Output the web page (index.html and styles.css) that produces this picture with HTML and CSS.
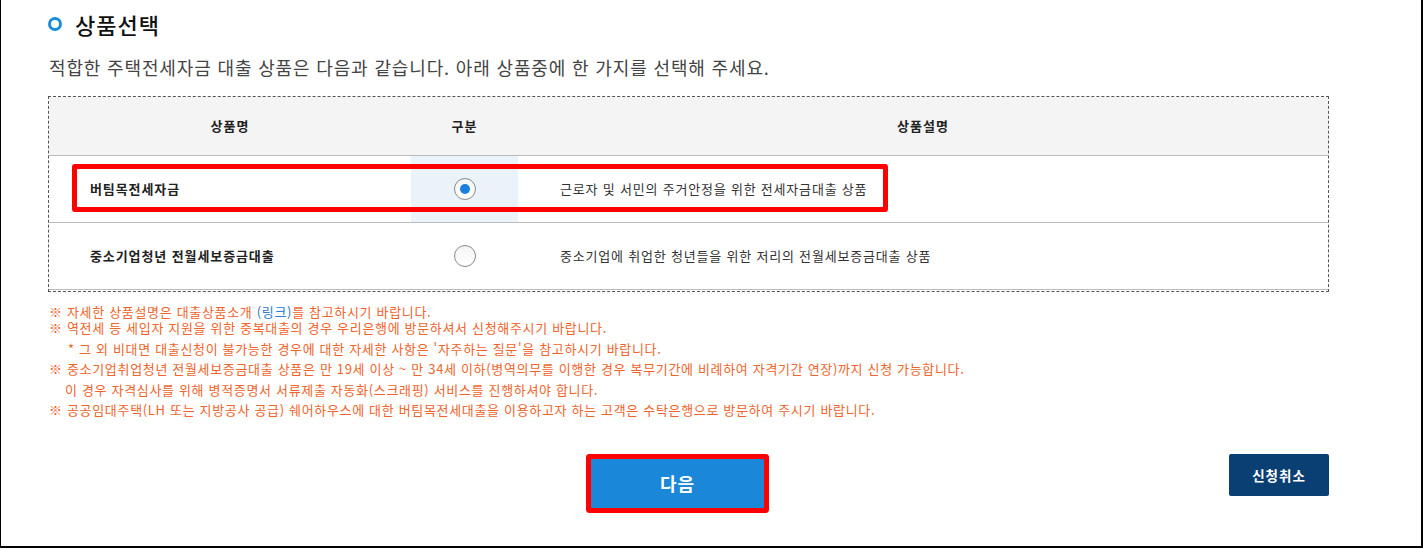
FILE: index.html
```html
<!DOCTYPE html>
<html lang="ko">
<head>
<meta charset="utf-8">
<title>상품선택</title>
<link rel="stylesheet" href="styles.css">
</head>
<body>
<div class="frame">
  <div class="content">
    <h2 class="title"><span class="title-icon"></span>상품선택</h2>
    <p class="lead">적합한 주택전세자금 대출 상품은 다음과 같습니다. 아래 상품중에 한 가지를 선택해 주세요.</p>

    <div class="table-wrap">
      <table class="products">
        <colgroup>
          <col class="c-name">
          <col class="c-type">
          <col class="c-desc">
        </colgroup>
        <thead>
          <tr>
            <th>상품명</th>
            <th>구분</th>
            <th>상품설명</th>
          </tr>
        </thead>
        <tbody>
          <tr>
            <td class="name">버팀목전세자금</td>
            <td class="type selected"><span class="radio checked"></span></td>
            <td class="desc">근로자 및 서민의 주거안정을 위한 전세자금대출 상품</td>
          </tr>
          <tr>
            <td class="name">중소기업청년 전월세보증금대출</td>
            <td class="type"><span class="radio"></span></td>
            <td class="desc">중소기업에 취업한 청년들을 위한 저리의 전월세보증금대출 상품</td>
          </tr>
        </tbody>
      </table>
      <div class="highlight"></div>
    </div>

    <div class="notes">
      <p class="note first">※ 자세한 상품설명은 대출상품소개 <span class="link">(링크)</span>를 참고하시기 바랍니다.</p>
      <p class="note">※ 역전세 등 세입자 지원을 위한 중복대출의 경우 우리은행에 방문하셔서 신청해주시기 바랍니다.</p>
      <p class="note sub1">* 그 외 비대면 대출신청이 불가능한 경우에 대한 자세한 사항은 '자주하는 질문'을 참고하시기 바랍니다.</p>
      <p class="note">※ 중소기업취업청년 전월세보증금대출 상품은 만 19세 이상 ~ 만 34세 이하(병역의무를 이행한 경우 복무기간에 비례하여 자격기간 연장)까지 신청 가능합니다.</p>
      <p class="note sub2">이 경우 자격심사를 위해 병적증명서 서류제출 자동화(스크래핑) 서비스를 진행하셔야 합니다.</p>
      <p class="note">※ 공공임대주택(LH 또는 지방공사 공급) 쉐어하우스에 대한 버팀목전세대출을 이용하고자 하는 고객은 수탁은행으로 방문하여 주시기 바랍니다.</p>
    </div>

    <div class="actions">
      <button class="btn-next" type="button">다음</button>
      <button class="btn-cancel" type="button">신청취소</button>
    </div>
  </div>
</div>
</body>
</html>
```

FILE: styles.css
```css
* { box-sizing: border-box; }

html, body {
  margin: 0;
  padding: 0;
  background: #fff;
}

body {
  font-family: "Noto Sans CJK KR", "Noto Sans", sans-serif;
  color: #333;
}

.frame {
  width: 1423px;
  height: 548px;
  border-left: 1px solid #000;
  border-right: 2px solid #000;
  border-bottom: 2px solid #000;
  overflow: hidden;
}

.content {
  padding-left: 47px;
  width: 1327px;
}

.title {
  margin: 0;
  padding-top: 7px;
  height: 40px;
  display: flex;
  align-items: center;
  font-size: 22px;
  line-height: 32px;
  font-weight: 500;
  letter-spacing: 1px;
  color: #111;
}

.title-icon {
  width: 14px;
  height: 14px;
  border: 3.5px solid #1a8fd9;
  border-radius: 50%;
  margin-right: 13px;
  flex: none;
}

.lead {
  margin: 14px 0 0 1px;
  font-size: 18px;
  line-height: 26px;
  letter-spacing: 0.85px;
  color: #444;
}

.table-wrap {
  position: relative;
  margin-top: 16px;
  width: 1281px;
  border: 1px dashed #555;
  padding-bottom: 1px;
}

.products {
  width: 100%;
  table-layout: fixed;
  border-collapse: collapse;
}

.c-name { width: 362px; }
.c-type { width: 107px; }

.products th {
  height: 58px;
  background: #f4f4f4;
  border-bottom: 1px solid #bbb;
  font-size: 13px;
  font-weight: 700;
  letter-spacing: 1px;
  color: #222;
  text-align: center;
  padding: 0;
}

.products td {
  height: 67px;
  border-bottom: 1px solid #bbb;
  font-size: 13px;
  padding: 0;
  vertical-align: middle;
}

.products td.name {
  padding-left: 41px;
  font-weight: 700;
  letter-spacing: 0.9px;
  color: #222;
}

.products td.type {
  text-align: center;
}

.products td.selected {
  background: #eaf2fa;
}

.products td.desc {
  padding-left: 42px;
  letter-spacing: 0.8px;
  color: #333;
}

.radio {
  display: inline-block;
  width: 22px;
  height: 22px;
  border: 1px solid #8a8a8a;
  border-radius: 50%;
  background: linear-gradient(#f4f4f4, #fff);
  vertical-align: middle;
  position: relative;
}

.radio.checked::after {
  content: "";
  position: absolute;
  left: 5px;
  top: 5px;
  width: 10px;
  height: 10px;
  border-radius: 50%;
  background: #1a7fdf;
}

.highlight {
  position: absolute;
  left: 23px;
  top: 67px;
  width: 816px;
  height: 48px;
  border: 5px solid #ff0000;
  border-radius: 3px;
  pointer-events: none;
}

.notes {
  margin-top: 10px;
  margin-left: 1px;
  color: #f0642a;
  font-size: 13px;
  letter-spacing: 0.67px;
}

.note {
  margin: 0;
  line-height: 20.5px;
  white-space: nowrap;
}

.note.first {
  margin-bottom: -4px;
}

.note.sub1 {
  padding-left: 19px;
}

.note.sub2 {
  padding-left: 16px;
}

.link {
  color: #2a7ad8;
}

.actions {
  display: flex;
  align-items: flex-start;
  margin-top: 33px;
  width: 1281px;
}

.btn-next {
  margin-left: 543px;
  margin-top: 5px;
  width: 173px;
  height: 49px;
  border: none;
  background: #1a87d9;
  color: #fff;
  font-family: inherit;
  font-size: 18px;
  font-weight: 700;
  letter-spacing: 1px;
  box-shadow: 0 0 0 5px #ff0000;
  border-radius: 1px;
}

.btn-cancel {
  margin-left: auto;
  width: 100px;
  height: 42px;
  border: none;
  border-radius: 2px;
  background: #0a3f73;
  color: #fff;
  font-family: inherit;
  font-size: 13.5px;
  font-weight: 700;
  letter-spacing: 1px;
}
```
